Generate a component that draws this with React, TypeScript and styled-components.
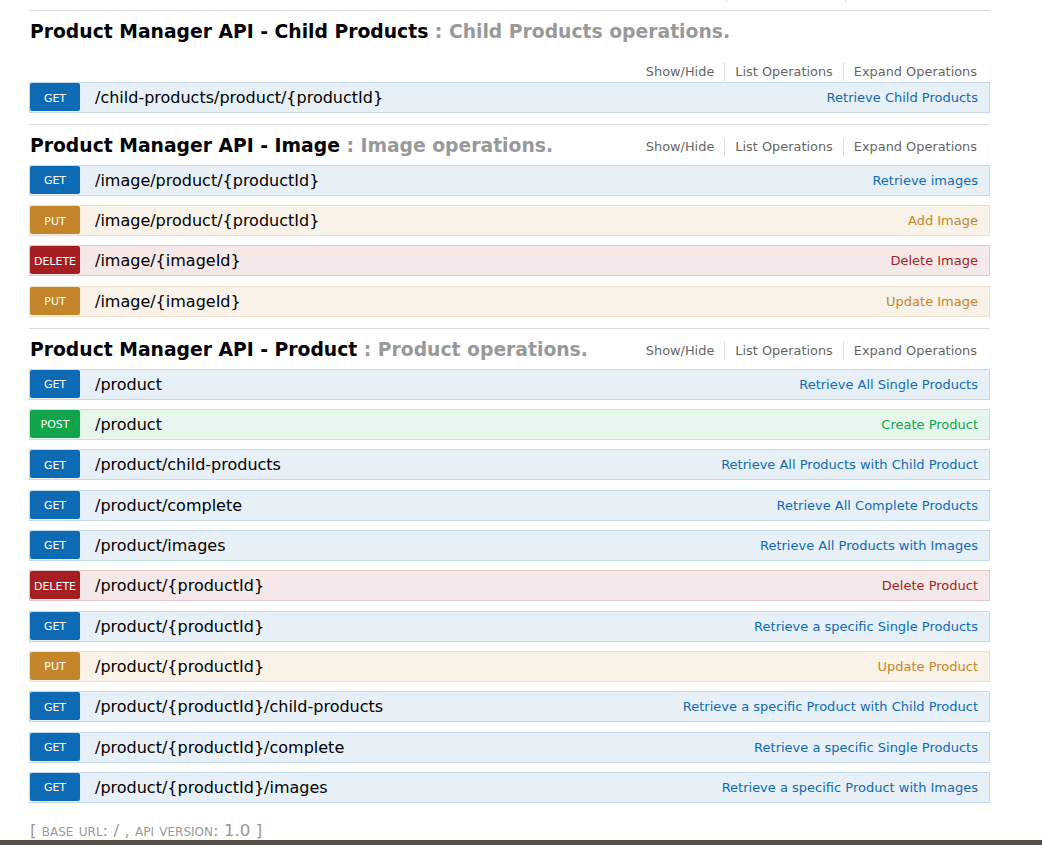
import React from "react";
import styled, { createGlobalStyle } from "styled-components";

const GlobalStyle = createGlobalStyle`
  html, body { margin: 0; padding: 0; background: #fff; }
  body { font-family: "DejaVu Sans", "Liberation Sans", sans-serif; }
`;

type Method = "get" | "put" | "post" | "delete";

const palette: Record<Method, { main: string; bg: string; border: string }> = {
  get: { main: "#0f6ab4", bg: "#e7f0f7", border: "#c3d9ec" },
  put: { main: "#c5862b", bg: "#f9f2e9", border: "#f0e0ca" },
  post: { main: "#10a54a", bg: "#e7f6ec", border: "#c3e8d1" },
  delete: { main: "#a41e22", bg: "#f5e8e8", border: "#e8c6c7" },
};

const Page = styled.div`
  display: flex;
  flex-direction: column;
  min-height: 845px;
`;

const Wrap = styled.div`
  width: 961px;
  margin-left: 29px;
  flex: 1;
`;

const TailSeparators = styled.div`
  display: flex;
  justify-content: flex-end;
  height: 2px;
  margin-bottom: 8px;
`;

const TailPiece = styled.div<{ $w: number; $sep?: boolean }>`
  width: ${(p) => p.$w}px;
  border-right: ${(p) => (p.$sep ? "1px solid #ddd" : "none")};
`;

const Resource = styled.section`
  border-top: 1px solid #ddd;
`;

const Heading = styled.div`
  display: flex;
  flex-wrap: wrap;
  align-items: flex-start;
  padding-bottom: 1px;
`;

const Title = styled.h2`
  margin: 0;
  padding: 10px 0 8px 1px;
  font-size: 18.75px;
  line-height: 21px;
  font-weight: bold;
  color: #000;
  white-space: nowrap;
`;

const Desc = styled.span`
  color: #999;
`;

const Options = styled.ul`
  list-style: none;
  margin: 13px 0 0 auto;
  padding: 0;
  display: flex;
`;

const OptionItem = styled.li`
  padding: 0 10px;
  font-size: 12.9px;
  line-height: 18px;
  color: #666;
  border-right: 1px solid #ddd;
  &:last-child {
    border-right: none;
    padding-right: 13px;
  }
`;

const OpList = styled.ul`
  list-style: none;
  margin: 0;
  padding: 0 0 1.5px;
`;

const OpRow = styled.li<{ $m: Method }>`
  display: flex;
  align-items: flex-start;
  height: 29px;
  margin-bottom: 9.33px;
  background: ${(p) => palette[p.$m].bg};
  border: 1px solid ${(p) => palette[p.$m].border};
`;

const Badge = styled.span<{ $m: Method }>`
  flex: none;
  width: 50px;
  height: 28px;
  box-sizing: border-box;
  padding-top: 2px;
  display: flex;
  align-items: center;
  justify-content: center;
  border-radius: 2px;
  background: ${(p) => palette[p.$m].main};
  color: #fff;
  font-size: 11px;
  text-transform: uppercase;
`;

const Path = styled.span`
  margin-left: 15px;
  font-size: 16px;
  line-height: 29px;
  color: #000;
  white-space: nowrap;
`;

const Summary = styled.span<{ $m: Method }>`
  margin-left: auto;
  padding-right: 11px;
  font-size: 13px;
  line-height: 29px;
  color: ${(p) => palette[p.$m].main};
  white-space: nowrap;
`;

const Footer = styled.h4`
  margin: 6px 0 0 1px;
  font-weight: normal;
  font-size: 16.7px;
  line-height: 20px;
  color: #999;
  font-variant: small-caps;
`;

const BottomBar = styled.div`
  height: 5px;
  background: #534f47;
`;

type Op = { m: Method; path: string; summary: string };
type Res = { name: string; desc: string; ops: Op[] };

const resources: Res[] = [
  {
    name: "Product Manager API - Child Products",
    desc: "Child Products operations.",
    ops: [{ m: "get", path: "/child-products/product/{productId}", summary: "Retrieve Child Products" }],
  },
  {
    name: "Product Manager API - Image",
    desc: "Image operations.",
    ops: [
      { m: "get", path: "/image/product/{productId}", summary: "Retrieve images" },
      { m: "put", path: "/image/product/{productId}", summary: "Add Image" },
      { m: "delete", path: "/image/{imageId}", summary: "Delete Image" },
      { m: "put", path: "/image/{imageId}", summary: "Update Image" },
    ],
  },
  {
    name: "Product Manager API - Product",
    desc: "Product operations.",
    ops: [
      { m: "get", path: "/product", summary: "Retrieve All Single Products" },
      { m: "post", path: "/product", summary: "Create Product" },
      { m: "get", path: "/product/child-products", summary: "Retrieve All Products with Child Product" },
      { m: "get", path: "/product/complete", summary: "Retrieve All Complete Products" },
      { m: "get", path: "/product/images", summary: "Retrieve All Products with Images" },
      { m: "delete", path: "/product/{productId}", summary: "Delete Product" },
      { m: "get", path: "/product/{productId}", summary: "Retrieve a specific Single Products" },
      { m: "put", path: "/product/{productId}", summary: "Update Product" },
      { m: "get", path: "/product/{productId}/child-products", summary: "Retrieve a specific Product with Child Product" },
      { m: "get", path: "/product/{productId}/complete", summary: "Retrieve a specific Single Products" },
      { m: "get", path: "/product/{productId}/images", summary: "Retrieve a specific Product with Images" },
    ],
  },
];

const optionLabels = ["Show/Hide", "List Operations", "Expand Operations"];

export default function App() {
  return (
    <Page>
      <GlobalStyle />
      <Wrap>
        <TailSeparators>
          <TailPiece $w={80} $sep />
          <TailPiece $w={118} $sep />
          <TailPiece $w={144} />
        </TailSeparators>
        {resources.map((r) => (
          <Resource key={r.name}>
            <Heading>
              <Title>
                {r.name} <Desc>: {r.desc}</Desc>
              </Title>
              <Options>
                {optionLabels.map((o) => (
                  <OptionItem key={o}>{o}</OptionItem>
                ))}
              </Options>
            </Heading>
            <OpList>
              {r.ops.map((op, i) => (
                <OpRow key={i} $m={op.m}>
                  <Badge $m={op.m}>{op.m}</Badge>
                  <Path>{op.path}</Path>
                  <Summary $m={op.m}>{op.summary}</Summary>
                </OpRow>
              ))}
            </OpList>
          </Resource>
        ))}
        <Footer>[ base url: / , api version: 1.0 ]</Footer>
      </Wrap>
      <BottomBar />
    </Page>
  );
}
